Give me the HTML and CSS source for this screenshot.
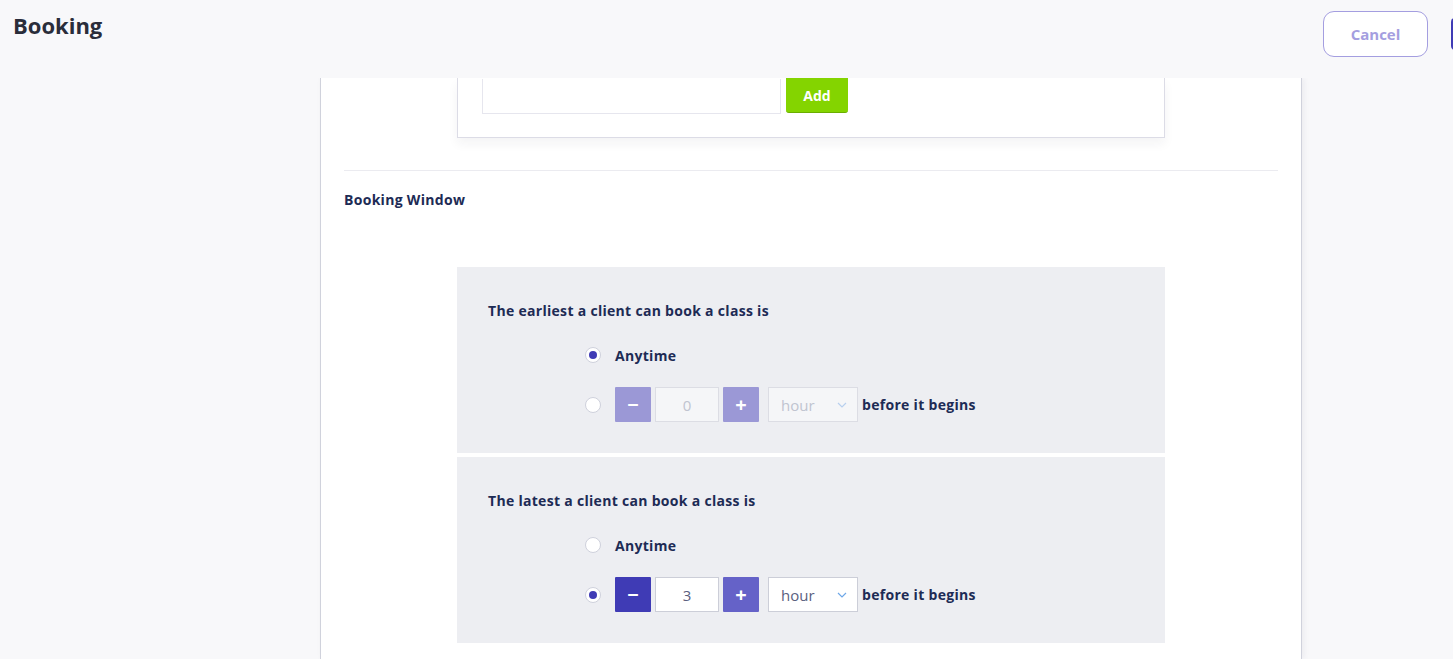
FILE: index.html
```html
<!DOCTYPE html>
<html lang="en">
<head>
  <meta charset="UTF-8">
  <title>Booking</title>
  <link rel="stylesheet" href="styles.css">
</head>
<body>
  <header class="topbar">
    <h1 class="page-title">Booking</h1>
    <div class="topbar-actions">
      <button class="btn-outline">Cancel</button>
      <button class="btn-solid" aria-label="Save"></button>
    </div>
  </header>

  <main class="viewport">
    <div class="card">
      <div class="tag-box">
        <div class="tag-row">
          <input class="tag-input" type="text">
          <button class="btn-add">Add</button>
        </div>
      </div>

      <hr class="divider">

      <h3 class="section-title">Booking Window</h3>

      <div class="window-group">
        <h4 class="group-title">The earliest a client can book a class is</h4>
        <div class="options">
          <label class="option">
            <span class="radio checked"></span>
            <span class="option-text">Anytime</span>
          </label>
          <div class="option">
            <span class="radio"></span>
            <div class="stepper disabled">
              <button class="step step-minus">&minus;</button>
              <div class="step-value">0</div>
              <button class="step step-plus">+</button>
            </div>
            <div class="unit-select disabled">
              <span>hour</span>
              <svg width="10" height="6" viewBox="0 0 10 6"><path d="M1 1l4 4 4-4" fill="none" stroke="currentColor" stroke-width="1.2"/></svg>
            </div>
            <span class="option-text">before it begins</span>
          </div>
        </div>
      </div>

      <div class="window-group">
        <h4 class="group-title">The latest a client can book a class is</h4>
        <div class="options">
          <label class="option">
            <span class="radio"></span>
            <span class="option-text">Anytime</span>
          </label>
          <div class="option">
            <span class="radio checked"></span>
            <div class="stepper">
              <button class="step step-minus">&minus;</button>
              <div class="step-value">3</div>
              <button class="step step-plus">+</button>
            </div>
            <div class="unit-select">
              <span>hour</span>
              <svg width="10" height="6" viewBox="0 0 10 6"><path d="M1 1l4 4 4-4" fill="none" stroke="currentColor" stroke-width="1.2"/></svg>
            </div>
            <span class="option-text">before it begins</span>
          </div>
        </div>
      </div>
    </div>
  </main>
</body>
</html>
```

FILE: styles.css
```css
body {
  margin: 0;
  height: 659px;
  overflow: hidden;
  font-family: 'Open Sans', 'Lato', sans-serif;
  background-color: #f8f8fa;
  color: #1d2b55;
}
button {
  font-family: inherit;
  cursor: pointer;
}
.topbar {
  height: 78px;
  display: flex;
  justify-content: space-between;
  align-items: flex-start;
  background: #f8f8fa;
  position: relative;
  z-index: 2;
}
.page-title {
  margin: 10px 0 0 13px;
  font-size: 22px;
  line-height: 30px;
  font-weight: 700;
  color: #2a2d3a;
}
.topbar-actions {
  display: flex;
  gap: 23px;
  padding-top: 11px;
  margin-right: -80px;
}
.btn-outline {
  width: 105px;
  height: 46px;
  padding-bottom: 2px;
  background: #fff;
  border: 1px solid #a49ee0;
  border-radius: 11px;
  color: #a49ee0;
  font-size: 15px;
  font-weight: 700;
}
.btn-solid {
  width: 82px;
  height: 32px;
  margin-top: 7px;
  background: #3f3bb5;
  border: none;
  border-radius: 4px;
}
.viewport {
  height: 581px;
  overflow: hidden;
}
.card {
  width: 982px;
  margin: 0 0 0 320px;
  height: 100%;
  background: #fff;
  border-left: 1px solid #d0d2dc;
  border-right: 1px solid #d0d2dc;
  box-shadow: 2px 0 6px rgba(30, 30, 60, 0.06);
  padding: 0 23px;
  box-sizing: border-box;
}
.tag-box {
  width: 708px;
  margin: 0 auto 0 113px;
  box-sizing: border-box;
  border: 1px solid #dcdce6;
  border-top: none;
  padding: 0 24px 23px;
  box-shadow: 0 6px 10px rgba(30, 30, 60, 0.05);
}
.tag-row {
  display: flex;
  align-items: flex-end;
  gap: 5px;
}
.tag-input {
  width: 299px;
  height: 35px;
  box-sizing: border-box;
  border: 1px solid #e6e6ee;
  border-top: none;
  background: #fff;
}
.btn-add {
  width: 62px;
  height: 35px;
  margin-bottom: 1px;
  background: #84d400;
  border: none;
  border-bottom: 1px solid #6aae00;
  border-radius: 0 0 3px 3px;
  color: #fff;
  font-size: 14px;
  font-weight: 700;
}
.divider {
  border: none;
  border-top: 1px solid #ebebf0;
  margin: 32px 0 0;
}
.section-title {
  margin: 19px 0 0;
  font-size: 14px;
  line-height: 20px;
  font-weight: 700;
  letter-spacing: 0.3px;
  color: #1d2b55;
}
.window-group {
  width: 708px;
  margin: 57px 0 0 113px;
  background: #edeef2;
  padding: 34px 31px 0;
  box-sizing: border-box;
  height: 186px;
}
.window-group + .window-group {
  margin-top: 4px;
}
.group-title {
  margin: 0;
  font-size: 14px;
  line-height: 20px;
  font-weight: 700;
  letter-spacing: 0.3px;
  color: #1d2b55;
}
.options {
  padding-left: 97px;
  margin-top: 24px;
  display: flex;
  flex-direction: column;
  gap: 22px;
}
.option {
  display: flex;
  align-items: center;
  height: 35px;
}
.option:first-child {
  height: 20px;
}
.radio {
  width: 16px;
  height: 16px;
  box-sizing: border-box;
  border: 1px solid #cfd1dc;
  border-radius: 50%;
  background: #fff;
  margin-right: 14px;
  display: flex;
  align-items: center;
  justify-content: center;
}
.radio.checked::after {
  content: "";
  width: 8px;
  height: 8px;
  border-radius: 50%;
  background: #3f3bb5;
}
.option-text {
  font-size: 14px;
  font-weight: 700;
  letter-spacing: 0.3px;
  color: #1d2b55;
}
.stepper {
  display: flex;
  gap: 4px;
  margin-right: 9px;
}
.step {
  width: 36px;
  height: 35px;
  border: none;
  border-radius: 1px;
  color: #fff;
  font-size: 20px;
  font-weight: 700;
  padding: 0;
  line-height: 1;
}
.step-minus {
  background: #3f3bb5;
}
.step-plus {
  background: #6562c8;
}
.step-value {
  width: 64px;
  height: 35px;
  box-sizing: border-box;
  border: 1px solid #ccced8;
  background: #fff;
  display: flex;
  align-items: center;
  justify-content: center;
  font-size: 15px;
  color: #5a6080;
}
.unit-select {
  width: 90px;
  height: 35px;
  box-sizing: border-box;
  border: 1px solid #ccced8;
  background: #fff;
  display: flex;
  align-items: center;
  justify-content: space-between;
  padding: 0 10px 0 12px;
  margin-right: 4px;
  font-size: 15px;
  color: #5a6080;
}
.unit-select svg {
  color: #6ea8e8;
}
.stepper.disabled .step {
  background: #9b98d6;
}
.stepper.disabled .step-value,
.unit-select.disabled {
  background: #f5f6f8;
  border-color: #dcdde4;
  color: #c0c4d0;
}
.unit-select.disabled svg {
  color: #b8d0ef;
}
```
